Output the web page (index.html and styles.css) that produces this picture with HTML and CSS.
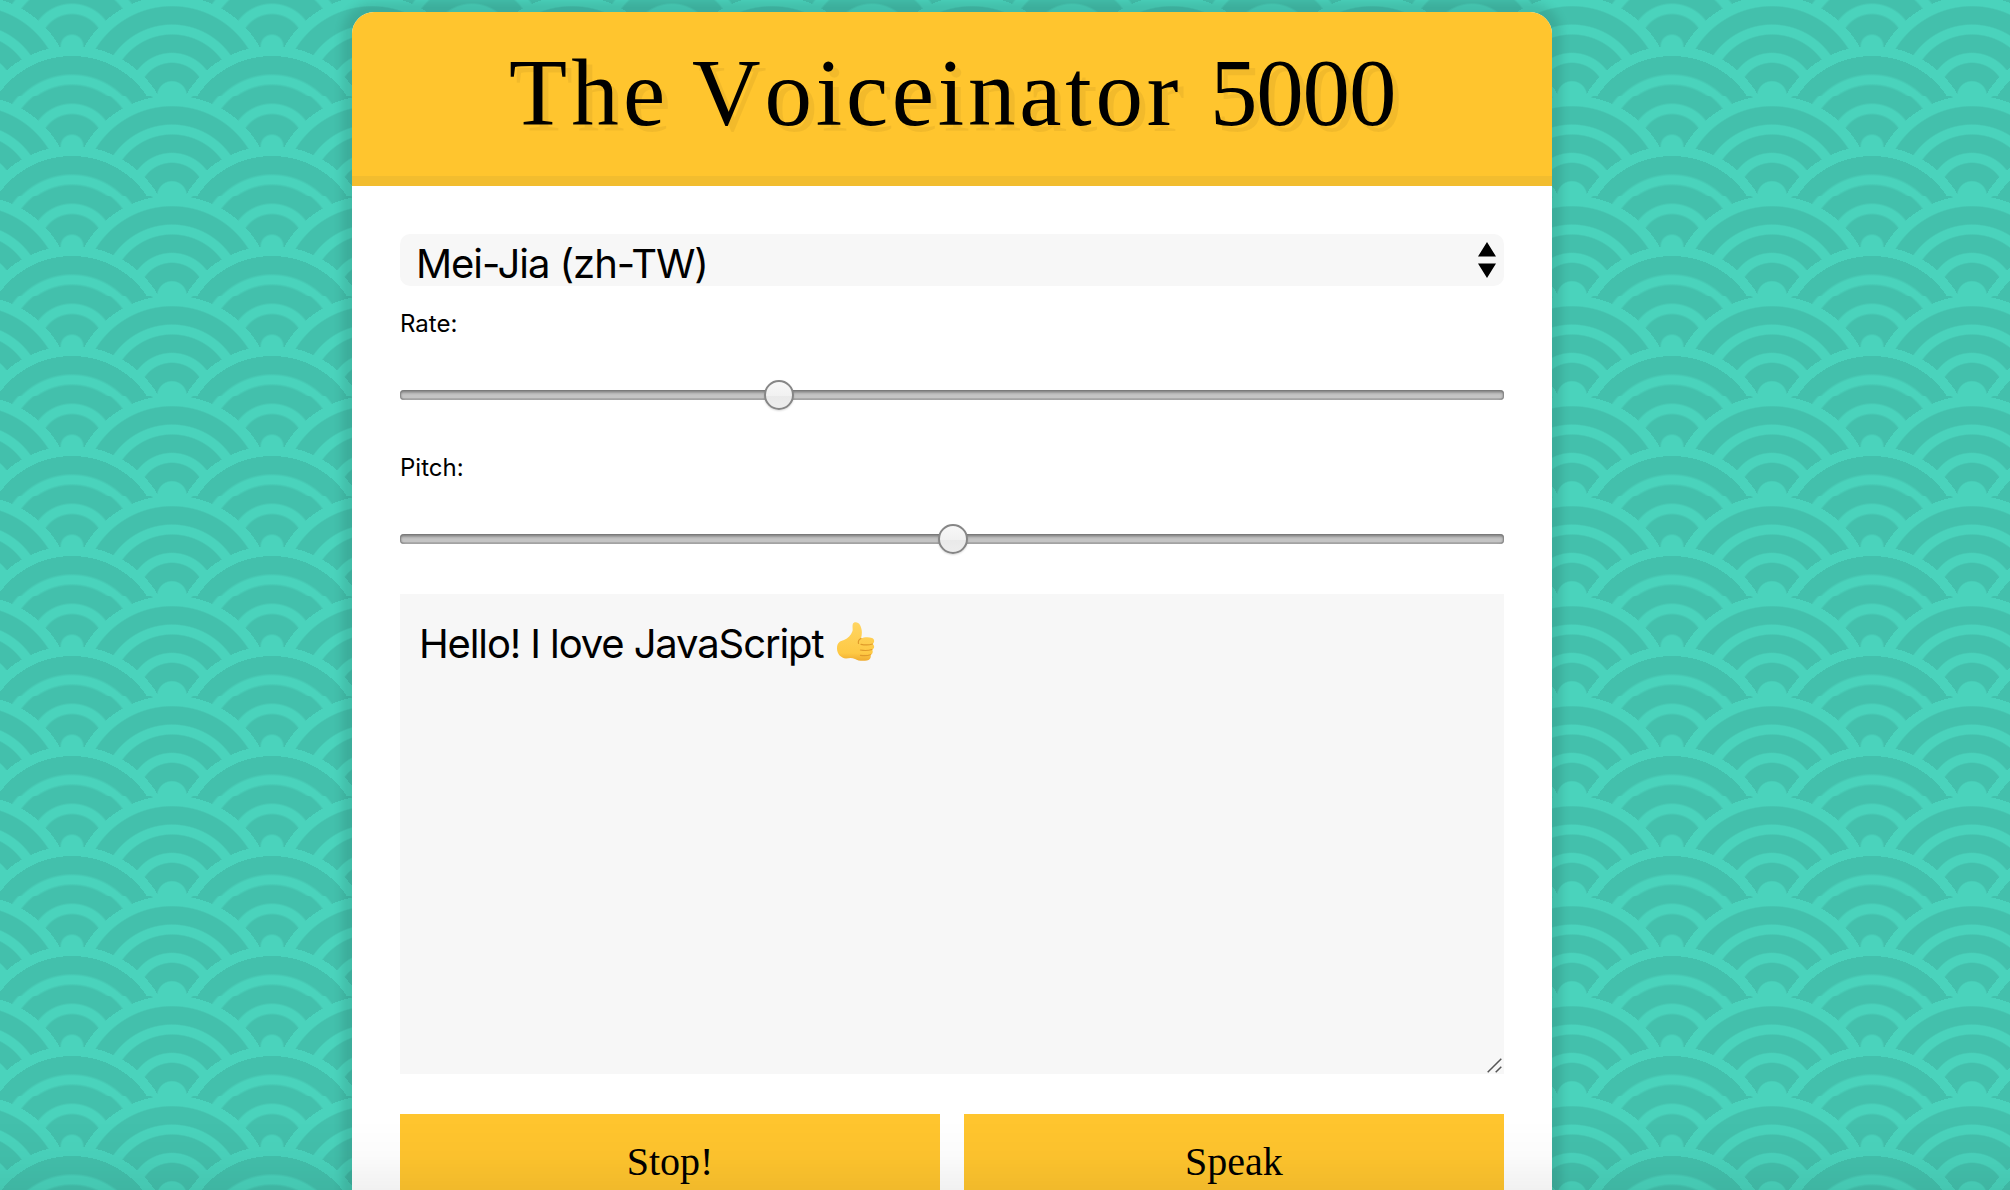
FILE: index.html
```html
<!DOCTYPE html>
<html lang="en">
<head>
<meta charset="utf-8">
<title>The Voiceinator 5000</title>
<link rel="stylesheet" href="styles.css">
</head>
<body>
<main class="voiceinator">
  <h1 class="title"><span class="word-the">The</span><span class="word-name">Voiceinator</span><span class="word-number">5000</span></h1>
  <div class="controls">
    <div class="voice-select">
      <span class="voice-name">Mei-Jia (zh-TW)</span>
      <svg class="arrows" width="18" height="36" viewBox="0 0 18 36"><path d="M9 0 18 14.5H0zM0 21.5H18L9 36z"/></svg>
    </div>
    <div class="label">Rate:</div>
    <div class="range"><div class="thumb" style="left:34.33%"></div></div>
    <div class="label">Pitch:</div>
    <div class="range"><div class="thumb" style="left:50.08%"></div></div>
    <div class="message">
      <span class="message-text">Hello! I love JavaScript</span>
      <svg class="thumbs-up" width="38" height="40" viewBox="0 0 38 40">
        <defs><linearGradient id="skin" x1="0" y1="0" x2="0" y2="1"><stop offset="0" stop-color="#ffd562"/><stop offset=".8" stop-color="#fec944"/><stop offset="1" stop-color="#efab30"/></linearGradient></defs>
        <path fill="url(#skin)" d="M16 1.500C17.500-.5 21.500 0 23 3c2 4 2.500 8 1 13.500 3-1.500 8-1.500 11-.5 3 1 2.500 5 .5 6 2.500 1.500 2 5-.5 5.500 1.500 2 .5 5-1.500 5.500 1 2.500-.5 5-3.500 5.500-4 .7-9 .5-12-1.500-3-1.500-6-1-9-.5C4 36 0 32 0 26.500c0-6 3-7.500 7-8.500 4-1.500 7-5 8.500-9 .5-2-.5-5.500.5-7.500z"/>
        <path fill="none" stroke="#e09b2b" stroke-width="1.200" stroke-linecap="round" d="M24 22.300c4 .8 8 .8 11.500-.3M23.500 28c4 .8 8 .6 11.500-.5M23.500 33.300c3.500.6 7 .5 10-.5M24 16.500c-2 1-3 3-2.500 5"/>
      </svg>
      <svg class="grip" width="15" height="15" viewBox="0 0 15 15"><path d="M.7 14.300 14.300.7M8.700 14.300 14.300 8.700"/></svg>
    </div>
    <div class="buttons">
      <button class="button stop">Stop!</button>
      <button class="button speak">Speak</button>
    </div>
  </div>
</main>
<div class="page-fade"></div>
</body>
</html>
```

FILE: styles.css
```css
* { box-sizing: border-box; }

html { height: 100%; }

body {
  --light: #4ad3bc;
  --dark: #43c0ac;
  height: 100%;
  margin: 0;
  padding-top: 12px;
  color: #000;
  font-family: Inter, "Liberation Sans", sans-serif;
  background-color: var(--dark);
  background-image:
    radial-gradient(circle at 100% 150%, var(--dark) 24%, var(--light) 25%, var(--light) 28%, var(--dark) 29%, var(--dark) 36%, var(--light) 36%, var(--light) 40%, transparent 40%, transparent),
    radial-gradient(circle at 0 150%, var(--dark) 24%, var(--light) 25%, var(--light) 28%, var(--dark) 29%, var(--dark) 36%, var(--light) 36%, var(--light) 40%, transparent 40%, transparent),
    radial-gradient(circle at 50% 100%, var(--light) 10%, var(--dark) 11%, var(--dark) 23%, var(--light) 24%, var(--light) 30%, var(--dark) 31%, var(--dark) 43%, var(--light) 44%, var(--light) 50%, var(--dark) 51%, var(--dark) 63%, var(--light) 64%, var(--light) 71%, transparent 71%, transparent),
    radial-gradient(circle at 100% 50%, var(--light) 5%, var(--dark) 6%, var(--dark) 15%, var(--light) 16%, var(--light) 20%, var(--dark) 21%, var(--dark) 30%, var(--light) 31%, var(--light) 35%, var(--dark) 36%, var(--dark) 45%, var(--light) 46%, var(--light) 49%, transparent 50%, transparent),
    radial-gradient(circle at 0 50%, var(--light) 5%, var(--dark) 6%, var(--dark) 15%, var(--light) 16%, var(--light) 20%, var(--dark) 21%, var(--dark) 30%, var(--light) 31%, var(--light) 35%, var(--dark) 36%, var(--dark) 45%, var(--light) 46%, var(--light) 49%, transparent 50%, transparent);
  background-size: 200px 100px;
  background-position: 72px -4px;
}

.voiceinator {
  width: 1200px;
  height: 1178px;
  margin-left: 352px;
  overflow: hidden;
  background: #fff;
  border-radius: 22px 22px 0 0;
  box-shadow: 0 0 10px 10px rgba(0, 0, 0, 0.1);
}

.title {
  display: flex;
  height: 174px;
  margin: 0;
  padding: 26px 0 0 157px;
  font: 400 95px/110px "Liberation Serif", serif;
  font-kerning: none;
  white-space: nowrap;
  text-shadow: 6px 6px 0 rgba(0, 0, 0, 0.05);
  background: #ffc52e;
  border-bottom: 10px solid #f2bd2f;
}

.word-the { width: 183px; letter-spacing: 4.2px; }
.word-name { width: 518px; letter-spacing: 3.8px; }
.word-number { letter-spacing: -1.2px; }

.controls { padding: 48px 48px 0; }

.voice-select {
  display: flex;
  justify-content: space-between;
  height: 52px;
  padding: 8px 8px 8px 16px;
  background: #f7f7f7;
  border-radius: 10px;
}

.voice-name { font-size: 40px; line-height: 44px; letter-spacing: -1.05px; white-space: nowrap; }

.label { height: 74px; margin-top: 20px; padding-top: 3px; font-size: 24px; line-height: 30px; }

.range {
  position: relative;
  height: 10px;
  margin: 10px 0 50px;
  border-radius: 4px;
  background: linear-gradient(#737373, #979797 20%, #b5b5b5 35%, #c4c4c4 50%, #c4c4c4 75%, #aaa 85%, #a8a8a8);
  box-shadow: inset 2px 0 2px -1px #777, inset -2px 0 2px -1px #777;
}

.thumb {
  position: absolute;
  top: -10px;
  width: 30px;
  height: 30px;
  margin-left: -15px;
  border: 2px solid #868686;
  border-radius: 50%;
  background: linear-gradient(#f8f8f8, #f1f1f1 52%, #e9e9e9 53%, #ededed);
  box-shadow: 0 1px 2px rgba(0, 0, 0, 0.15);
}

.message {
  position: relative;
  display: flex;
  align-items: flex-start;
  height: 480px;
  padding: 20px 19px;
  background: #f7f7f7;
}

.message-text { width: 418px; font-size: 40px; line-height: 60px; letter-spacing: -1.12px; white-space: nowrap; }
.thumbs-up { margin-top: 8px; }

.grip {
  position: absolute;
  right: 2px;
  bottom: 1px;
  fill: none;
  stroke: #555;
  stroke-width: 1.500px;
}

.buttons { display: flex; gap: 24px; margin-top: 40px; }

.button {
  flex: 1;
  height: 76px;
  padding: 18px 0 0;
  border: 0;
  color: #000;
  font: 400 40px "Liberation Serif", serif;
  background: #ffc52e;
}

/* soft darkening along the bottom of the window */
.page-fade {
  position: fixed;
  inset: auto 0 0;
  height: 70px;
  background: linear-gradient(transparent, rgba(0, 0, 0, 0.015) 50%, rgba(0, 0, 0, 0.055));
}
```
